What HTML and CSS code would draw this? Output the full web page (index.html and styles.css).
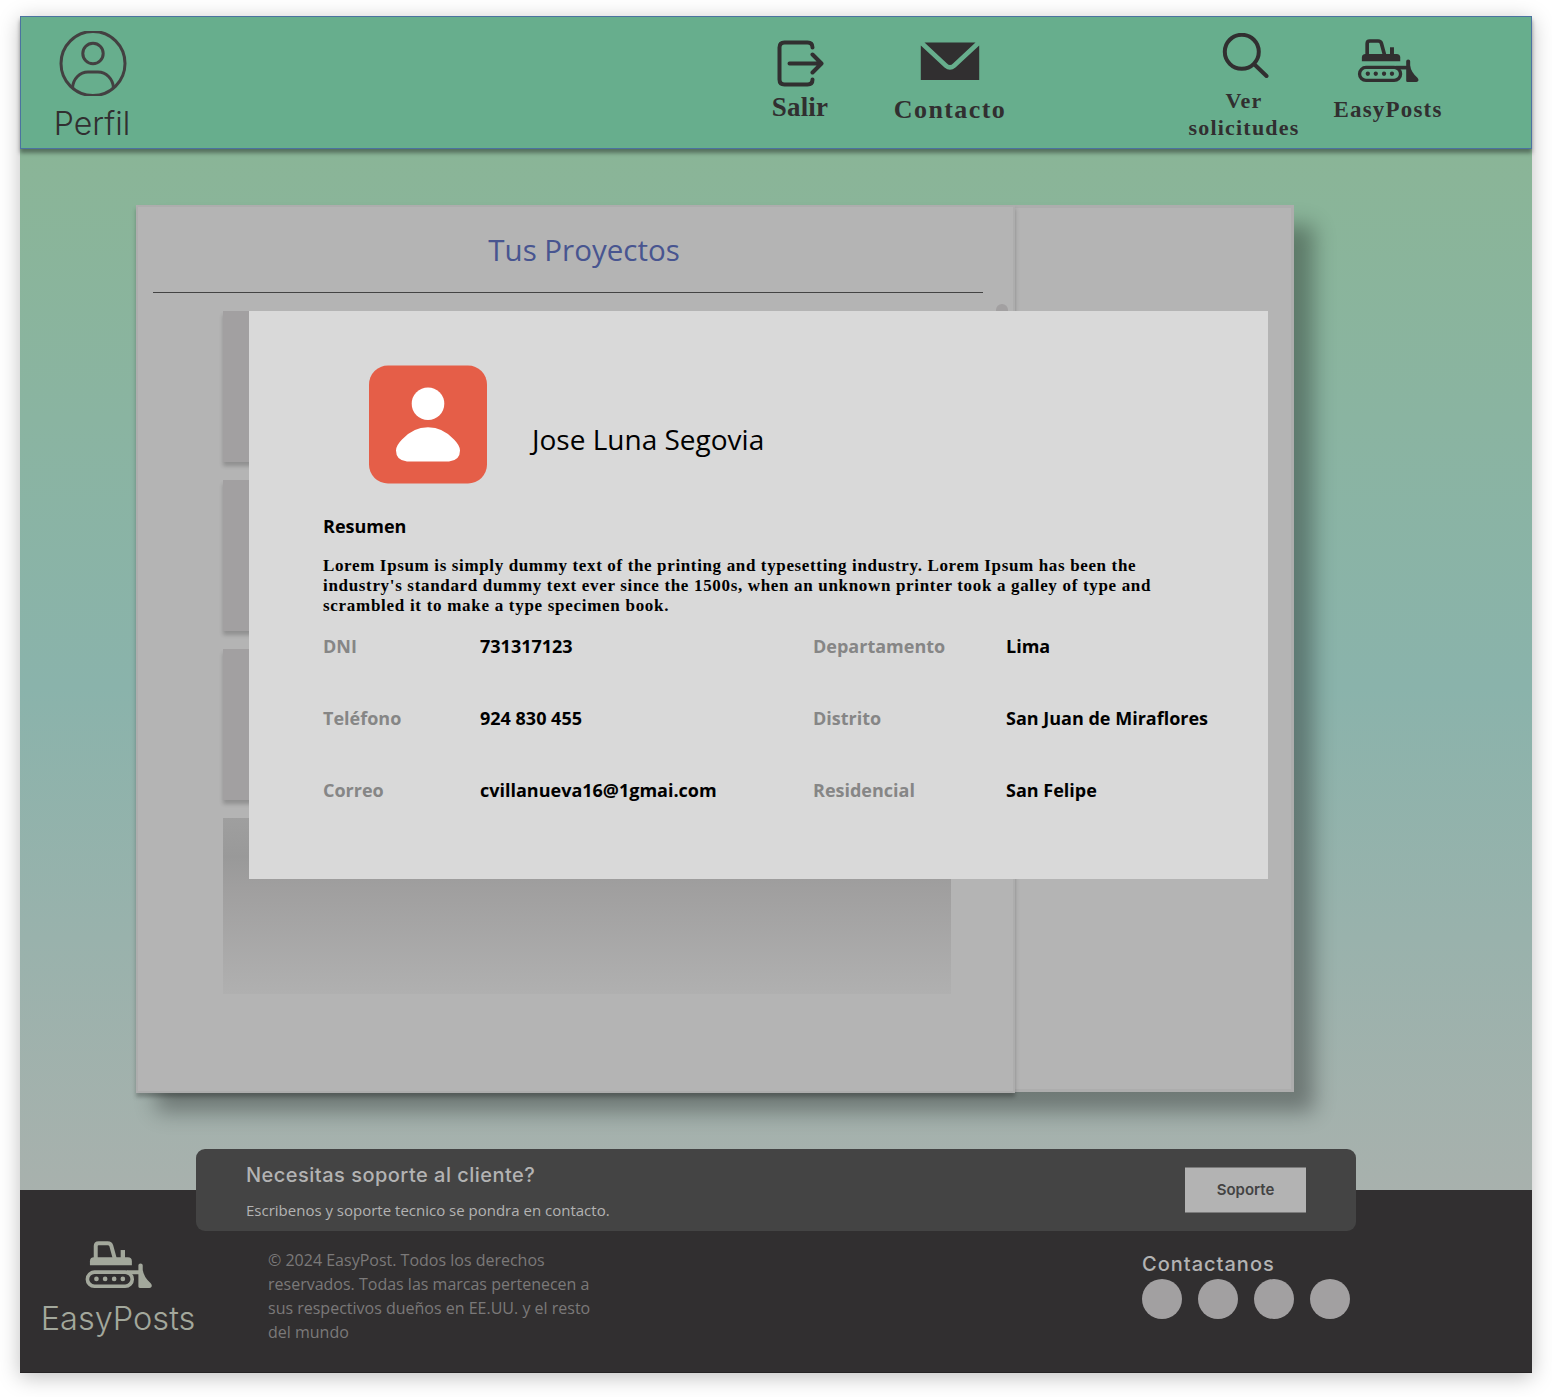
FILE: index.html
```html
<!DOCTYPE html>
<html lang="es">
<head>
<meta charset="utf-8">
<title>EasyPosts - Perfil</title>
<link rel="stylesheet" href="styles.css">
</head>
<body>
<svg class="symbols" width="0" height="0" aria-hidden="true">
  <symbol id="dozer" viewBox="0 0 184 130">
    <path d="M13 67V56q0-11 11-11h94q11 0 11 11v11z" fill="currentColor"/>
    <path d="M29 50V14q0-8 8-8h25q8 0 10 7l10 37" fill="none" stroke="currentColor" stroke-width="11"/>
    <path d="M98 25h12v24H98z" fill="currentColor"/>
    <rect x="6" y="86" width="124" height="39" rx="19.500" fill="none" stroke="currentColor" stroke-width="10"/>
    <g fill="currentColor"><circle cx="31" cy="105" r="6.500"/><circle cx="55" cy="105" r="6.500"/><circle cx="80" cy="105" r="6.500"/><circle cx="104" cy="105" r="6.500"/>
    <path d="M115 81h36v11h-36z"/>
    <path d="M147 67q0-5 6-5t6 5v12q2 20 22 38q5 6 2 10q-2 3-6 3h-26q-4 0-4-4z"/></g>
  </symbol>
</svg>
<div class="screen">
  <header class="topbar">
    <a class="nav nav-profile">
      <svg width="68" height="65" viewBox="0 0 68 65" fill="none" stroke="#434041" stroke-width="3"><circle cx="34" cy="32.500" r="32"/><circle cx="34" cy="22.500" r="10.200"/><path d="M13.500 57C14 47.500 21 41 29 41h10c8 0 15 6.500 15.500 16"/></svg>
      <span>Perfil</span>
    </a>
    <a class="nav nav-exit">
      <svg width="48" height="48" viewBox="0 0 48 48" fill="none" stroke="#312f30" stroke-width="4" stroke-linecap="round" stroke-linejoin="round"><path d="M36.500 7.500Q36.500 2.500 31.500 2.500H8.500Q3.500 2.500 3.500 7.500V39.500Q3.500 44.500 8.500 44.500H31.500Q36.500 44.500 36.500 39.500M13.500 23.500H45M36.500 14.500L45.500 23.500L36.500 32.500"/></svg>
      <span>Salir</span>
    </a>
    <a class="nav nav-contact">
      <svg width="60" height="38" viewBox="0 0 60 38" fill="#312f30"><path d="M4.500.500H55.500L33 21.500Q30 24.500 27 21.500z"/><path d="M.800 3.500L24.500 25.500Q30 30 35.500 25.500L59.200 3.500V38H.800z"/></svg>
      <span>Contacto</span>
    </a>
    <a class="nav nav-requests">
      <svg width="47" height="46" viewBox="0 0 47 46" fill="none" stroke="#312f30" stroke-width="4" stroke-linecap="round"><circle cx="19.800" cy="18.800" r="17"/><path d="M32.500 31.500L44.500 43"/></svg>
      <span>Ver<br>solicitudes</span>
    </a>
    <a class="nav nav-brand">
      <svg width="62" height="43"><use href="#dozer"/></svg>
      <span>EasyPosts</span>
    </a>
  </header>

  <main class="content">
    <div class="board">
      <section class="projects">
        <h1>Tus Proyectos</h1>
        <div class="list">
          <div class="card"></div>
          <div class="card"></div>
          <div class="card"></div>
          <div class="card card-fade"></div>
        </div>
        <i class="thumb"></i>
      </section>
      <aside class="side"></aside>
    </div>
  </main>

  <footer class="footer">
    <div class="brand">
      <svg width="67" height="47"><use href="#dozer"/></svg>
      <span>EasyPosts</span>
    </div>
    <p class="legal">© 2024 EasyPost. Todos los derechos<br>reservados. Todas las marcas pertenecen a<br>sus respectivos dueños en EE.UU. y el resto<br>del mundo</p>
    <div class="social">
      <h3>Contactanos</h3>
      <div class="dots"><i></i><i></i><i></i><i></i></div>
    </div>
    <div class="support">
      <div>
        <h2>Necesitas soporte al cliente?</h2>
        <p>Escribenos y soporte tecnico se pondra en contacto.</p>
      </div>
      <button>Soporte</button>
    </div>
  </footer>

  <div class="modal">
    <div class="person">
      <svg width="118" height="119" viewBox="0 0 118 119"><rect y=".5" width="118" height="118" rx="19" fill="#e55e48"/><circle cx="59" cy="38.800" r="16.300" fill="#fff"/><path d="M38 96.500Q27 95.500 27 85.500Q27 80.500 33 74.500Q44 62.200 59 62.200T85 74.500Q91 80.500 91 85.500Q91 95.500 80 96.500z" fill="#fff"/></svg>
      <span>Jose Luna Segovia</span>
    </div>
    <h4>Resumen</h4>
    <p class="summary"><span class="l1">Lorem Ipsum is simply dummy text of the printing and typesetting industry. Lorem Ipsum has been the</span> <span class="l2">industry's standard dummy text ever since the 1500s, when an unknown printer took a galley of type and</span> <span class="l3">scrambled it to make a type specimen book.</span></p>
    <dl>
      <dt>DNI</dt><dd>731317123</dd><dt>Departamento</dt><dd>Lima</dd>
      <dt>Teléfono</dt><dd>924 830 455</dd><dt>Distrito</dt><dd>San Juan de Miraflores</dd>
      <dt>Correo</dt><dd>cvillanueva16@1gmai.com</dd><dt>Residencial</dt><dd>San Felipe</dd>
    </dl>
  </div>
</div>
</body>
</html>
```
FILE: styles.css
```css
* { box-sizing: border-box; margin: 0; padding: 0; }
body { background: #fff; font-family: "Open Sans", sans-serif; overflow: hidden; }
.symbols { position: absolute; }
svg { display: block; flex: none; }
.screen {
  position: relative; width: 1512px; height: 1357px; margin: 16px 20px 24px;
  display: flex; flex-direction: column; white-space: nowrap;
  background: linear-gradient(#8ab597 134px, #8ab3ab 670px, #a8b1ad 1174px);
  box-shadow: 0 4px 20px rgba(0,0,0,.25);
}

.topbar {
  position: relative; height: 133px; flex: none; display: flex; align-items: flex-start;
  padding-left: 22px; background: #67ae8d; border: 1px solid #4b73a0;
  box-shadow: 0 4px 4px rgba(0,0,0,.38);
}
.nav {
  display: flex; flex-direction: column; align-items: center; text-align: center;
  color: #312f30; font: bold 23px/27px "Liberation Serif", serif;
}
.nav-profile { width: 100px; padding-top: 14px; font: 350 32px/40px Inter, sans-serif; }
.nav-profile span { margin: 8px 2px 0 0; }
.nav-exit { width: 80px; margin-left: 617px; padding-top: 23px; font-size: 27px; line-height: 30px; letter-spacing: .2px; }
.nav-exit span { margin-top: 4px; }
.nav-contact { width: 140px; margin-left: 40px; padding-top: 25px; font-size: 26px; line-height: 30px; letter-spacing: 1.4px; }
.nav-contact svg { margin-right: 1px; }
.nav-contact span { margin: 15px 0 0 0; }
.nav-requests { width: 120px; margin-left: 164px; padding-top: 16px; font-size: 22px; letter-spacing: 1.2px; }
.nav-requests svg { margin-left: 3px; }
.nav-requests span { margin-top: 8px; }
.nav-brand { width: 120px; margin-left: 24px; padding-top: 22px; letter-spacing: 1.2px; }
.nav-brand span { margin-top: 14px; }

.content { height: 1041px; flex: none; padding: 56px 0 0 116px; }
.board { width: 1158px; height: 887px; display: flex; align-items: flex-start; box-shadow: 20px 20px 20px rgba(0,0,0,.32); }
.projects {
  position: relative; width: 879px; height: 888px; padding: 20px 0 0 15px;
  background: #b4b4b4; border: 2px solid #adadad; box-shadow: 0 4px 4px rgba(0,0,0,.25);
}
.projects h1 {
  width: 830px; height: 66px; padding-left: 32px; border-bottom: 1px solid #434343;
  color: #485590; font-size: 29.500px; font-weight: 400; line-height: 46px; text-align: center;
}
.list { width: 728px; margin: 18px 0 0 70px; display: flex; flex-direction: column; gap: 18px; }
.card { height: 151px; background: #a2a0a1; box-shadow: 0 4px 4px rgba(0,0,0,.2); }
.card-fade { height: 176px; box-shadow: none; background: linear-gradient(#9f9f9f, #999 22%, #a09f9f 40%, #b0b0b0); }
.thumb { position: absolute; left: 858px; top: 97px; width: 12px; height: 200px; border-radius: 6px; background: #a2a0a1; }
.side { flex: 1; height: 887px; background: #b4b4b4; border: 3px solid #adadad; border-left: 0; }

.footer { position: relative; flex: 1; display: flex; background: #312f30; border-bottom: 1px solid #262425; }
.brand { width: 196px; padding-top: 51px; display: flex; flex-direction: column; align-items: center; color: #a3a89c; font: 350 32.500px/40px Inter, sans-serif; }
.brand span { margin-top: 11px; }
.legal { margin-left: 52px; padding-top: 58px; color: #7b7979; font-size: 16px; line-height: 24px; }
.social { position: relative; padding-top: 59px; margin-left: auto; width: 390px; }
.social h3 { color: #b3b3b3; font: 450 20px/30px Inter, sans-serif; letter-spacing: 1px; }
.dots { display: flex; gap: 16px; }
.dots i { width: 40px; height: 40px; border-radius: 50%; background: #a2a0a1; }
.support {
  position: absolute; left: 176px; top: -41px; width: 1160px; height: 82px;
  display: flex; justify-content: space-between; align-items: center; padding: 0 50px;
  border-radius: 9px; background: #444;
}
.support h2 { margin-top: 1px; color: #b3b3b3; font: 500 20px/30px Inter, sans-serif; letter-spacing: .48px; }
.support p { margin-top: 8px; color: #b3b3b3; font-size: 15px; line-height: 24px; }
.support button { width: 121px; height: 46px; padding-bottom: 2px; border: solid #7b7b7b; border-width: 1px 0; background: #b3b3b3; color: #434343; font: 600 15px Inter, sans-serif; }

.modal { position: absolute; left: 229px; top: 295px; width: 1019px; height: 568px; padding: 54px 0 0 74px; background: #d9d9d9; color: #000; }
.person { display: flex; padding-left: 46px; }
.person span { margin: 54px 0 0 45px; font-size: 28px; line-height: 40px; }
.modal h4 { margin-top: 28px; font-size: 18px; line-height: 28px; }
.summary { margin-top: 16px; font: bold 17px/20px "Liberation Serif", serif; }
.summary span { display: block; }
.l1 { letter-spacing: .64px; }
.l2 { letter-spacing: .67px; }
.l3 { letter-spacing: .71px; }
.modal dl { margin-top: 16px; display: grid; grid-template-columns: 157px 333px 193px 1fr; grid-auto-rows: 72px; font-size: 18px; font-weight: 700; line-height: 28px; }
.modal dt { color: #868686; }
```
